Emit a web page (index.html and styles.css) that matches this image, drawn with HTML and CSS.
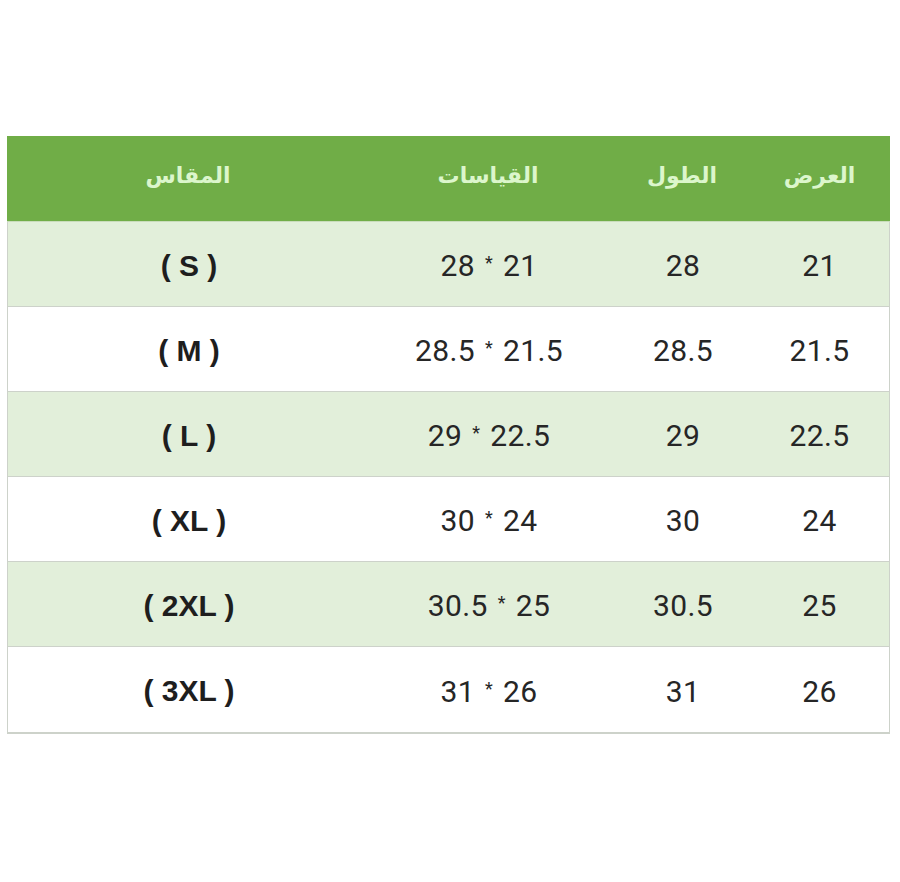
FILE: index.html
```html
<!DOCTYPE html>
<html lang="ar">
<head>
<meta charset="utf-8">
<title>جدول المقاسات</title>
<link rel="stylesheet" href="styles.css">
</head>
<body>
<div class="size-table">
  <div class="row head">
    <div class="cell" lang="ar">المقاس</div>
    <div class="cell" lang="ar">القياسات</div>
    <div class="cell" lang="ar">الطول</div>
    <div class="cell last" lang="ar">العرض</div>
  </div>
  <div class="row tint">
    <div class="cell size">( S )</div>
    <div class="cell num">28 <span class="star">*</span> 21</div>
    <div class="cell num">28</div>
    <div class="cell num last">21</div>
  </div>
  <div class="row">
    <div class="cell size">( M )</div>
    <div class="cell num">28.5 <span class="star">*</span> 21.5</div>
    <div class="cell num">28.5</div>
    <div class="cell num last">21.5</div>
  </div>
  <div class="row tint">
    <div class="cell size">( L )</div>
    <div class="cell num">29 <span class="star">*</span> 22.5</div>
    <div class="cell num">29</div>
    <div class="cell num last">22.5</div>
  </div>
  <div class="row">
    <div class="cell size">( XL )</div>
    <div class="cell num">30 <span class="star">*</span> 24</div>
    <div class="cell num">30</div>
    <div class="cell num last">24</div>
  </div>
  <div class="row tint">
    <div class="cell size">( 2XL )</div>
    <div class="cell num">30.5 <span class="star">*</span> 25</div>
    <div class="cell num">30.5</div>
    <div class="cell num last">25</div>
  </div>
  <div class="row">
    <div class="cell size">( 3XL )</div>
    <div class="cell num">31 <span class="star">*</span> 26</div>
    <div class="cell num">31</div>
    <div class="cell num last">26</div>
  </div>
</div>
</body>
</html>
```

FILE: styles.css
```css
html, body {
  margin: 0;
  padding: 0;
  background: #ffffff;
}

body {
  font-family: Roboto, "Liberation Sans", sans-serif;
  color: #262626;
}

.size-table {
  margin: 136px 0 0 7px;
  width: 883px;
  border-left: 1px solid #cdd2ca;
  border-right: 1px solid #cdd2ca;
  border-bottom: 2px solid #cdd2ca;
  box-sizing: border-box;
}

.row {
  display: grid;
  grid-template-columns: 362px 238px 150px 1fr;
  height: 85px;
  align-items: center;
  border-bottom: 1px solid #cdd2ca;
  box-sizing: border-box;
  background: #ffffff;
}

.row:last-child {
  border-bottom: none;
}

.row.tint {
  background: #e2efda;
}

.row.head {
  height: 86px;
  background: #70ad47;
  border-bottom: 1px solid #c9dcbb;
  margin: 0 -1px;
}

.cell {
  text-align: center;
  white-space: nowrap;
}

.cell.last {
  padding-right: 8px;
}

.head .cell {
  font-family: "DejaVu Sans", "Noto Sans", sans-serif;
  font-size: 22px;
  font-weight: bold;
  color: #dcf6cc;
  padding-bottom: 6px;
}

.num {
  font-size: 30px;
  letter-spacing: 0.4px;
  padding-top: 3px;
}

.star {
  font-size: 18px;
  vertical-align: 7px;
  padding: 0 2px;
}

.size {
  font-family: "Liberation Sans", Arial, sans-serif;
  font-weight: bold;
  font-size: 30px;
  color: #1e1e1e;
  padding-top: 3px;
}
```
